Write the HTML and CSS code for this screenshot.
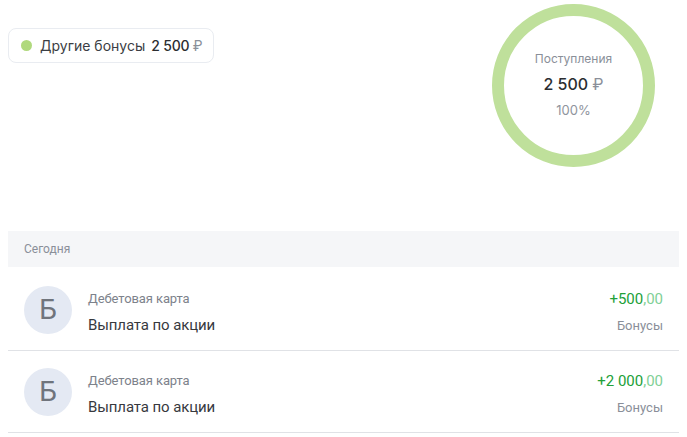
FILE: index.html
```html
<!DOCTYPE html>
<html lang="ru">
<head>
<meta charset="utf-8">
<link rel="stylesheet" href="styles.css">
</head>
<body>
<div class="page">
  <div class="top">
    <div class="legend">
      <span class="dot"></span>
      <span class="legend-label">Другие бонусы</span>
      <span class="legend-value">2 500 <span class="rub">₽</span></span>
    </div>
    <div class="donut">
      <div class="donut-inner">
        <div class="donut-title">Поступления</div>
        <div class="donut-sum">2 500 <span class="rub">₽</span></div>
        <div class="donut-pct">100%</div>
      </div>
    </div>
  </div>
  <div class="day">Сегодня</div>
  <ul class="list">
    <li class="row">
      <div class="avatar">Б</div>
      <div class="info">
        <div class="sub">Дебетовая карта</div>
        <div class="name">Выплата по акции</div>
      </div>
      <div class="right">
        <div class="amount">+500<span class="cents">,00</span></div>
        <div class="cat">Бонусы</div>
      </div>
    </li>
    <li class="row">
      <div class="avatar">Б</div>
      <div class="info">
        <div class="sub">Дебетовая карта</div>
        <div class="name">Выплата по акции</div>
      </div>
      <div class="right">
        <div class="amount">+2 000<span class="cents">,00</span></div>
        <div class="cat">Бонусы</div>
      </div>
    </li>
  </ul>
</div>
</body>
</html>
```
FILE: styles.css
```css
* { box-sizing: border-box; }
html, body { margin: 0; background: #fff; }
body { font-family: Roboto, "Noto Sans", sans-serif; color: #333; }
.page { padding: 0 8px; }
.top {
  display: flex;
  justify-content: space-between;
  align-items: flex-start;
  padding-top: 4px;
  height: 231px;
}
.legend {
  margin-top: 24px;
  height: 35px;
  display: flex;
  align-items: center;
  padding: 0 11px 0 12px;
  border: 1px solid #e9ecf1;
  border-radius: 8px;
  font-family: Inter, "Liberation Sans", sans-serif;
  font-size: 14px;
  color: #3b3e44;
}
.dot {
  width: 11px; height: 11px; border-radius: 50%;
  background: #b0d97d;
  margin-right: 8px;
}
.legend-value { font-weight: 500; margin-left: 6px; color: #2b2d31; letter-spacing: -0.2px; }
.rub { font-weight: 400; color: #8a8f99; }
.donut {
  width: 163px; height: 163px;
  border-radius: 50%;
  border: 12px solid #bfe09b;
  margin-right: 24px;
  display: flex;
  align-items: center;
  justify-content: center;
  font-family: Inter, "Liberation Sans", sans-serif;
  text-align: center;
}
.donut-inner { margin-top: -2px; }
.donut-title { font-size: 12px; color: #8a8f99; line-height: 16px; }
.donut-sum { font-size: 16px; font-weight: 500; color: #2b2d31; line-height: 20px; margin-top: 7px; }
.donut-pct { font-size: 13px; color: #8f949d; line-height: 16px; margin-top: 8px; }
.day {
  height: 36px;
  background: #f5f6f8;
  display: flex;
  align-items: center;
  padding-left: 16px;
  font-size: 12px;
  color: #8a8f99;
}
.list { list-style: none; margin: 2px 0 0; padding: 0; }
.row {
  height: 82px;
  display: flex;
  align-items: center;
  padding: 0 16px;
  border-bottom: 1px solid #e0e2e6;
}
.avatar {
  width: 48px; height: 48px; border-radius: 50%;
  background: #e4e9f3;
  color: #6f747c;
  font-size: 28px;
  display: flex; align-items: center; justify-content: center;
  flex: none;
}
.info { flex: 1; margin-left: 16px; padding-top: 5px; }
.sub { font-size: 13px; color: #7d828b; line-height: 16px; letter-spacing: -0.1px; }
.name { font-size: 15px; color: #37393e; line-height: 18px; margin-top: 9px; letter-spacing: -0.1px; }
.right { text-align: right; padding-top: 5px; }
.amount { font-size: 15px; color: #21a038; line-height: 16px; }
.cents { color: #7fd096; }
.cat { font-size: 13px; color: #8a8f99; line-height: 16px; margin-top: 11px; }
```
